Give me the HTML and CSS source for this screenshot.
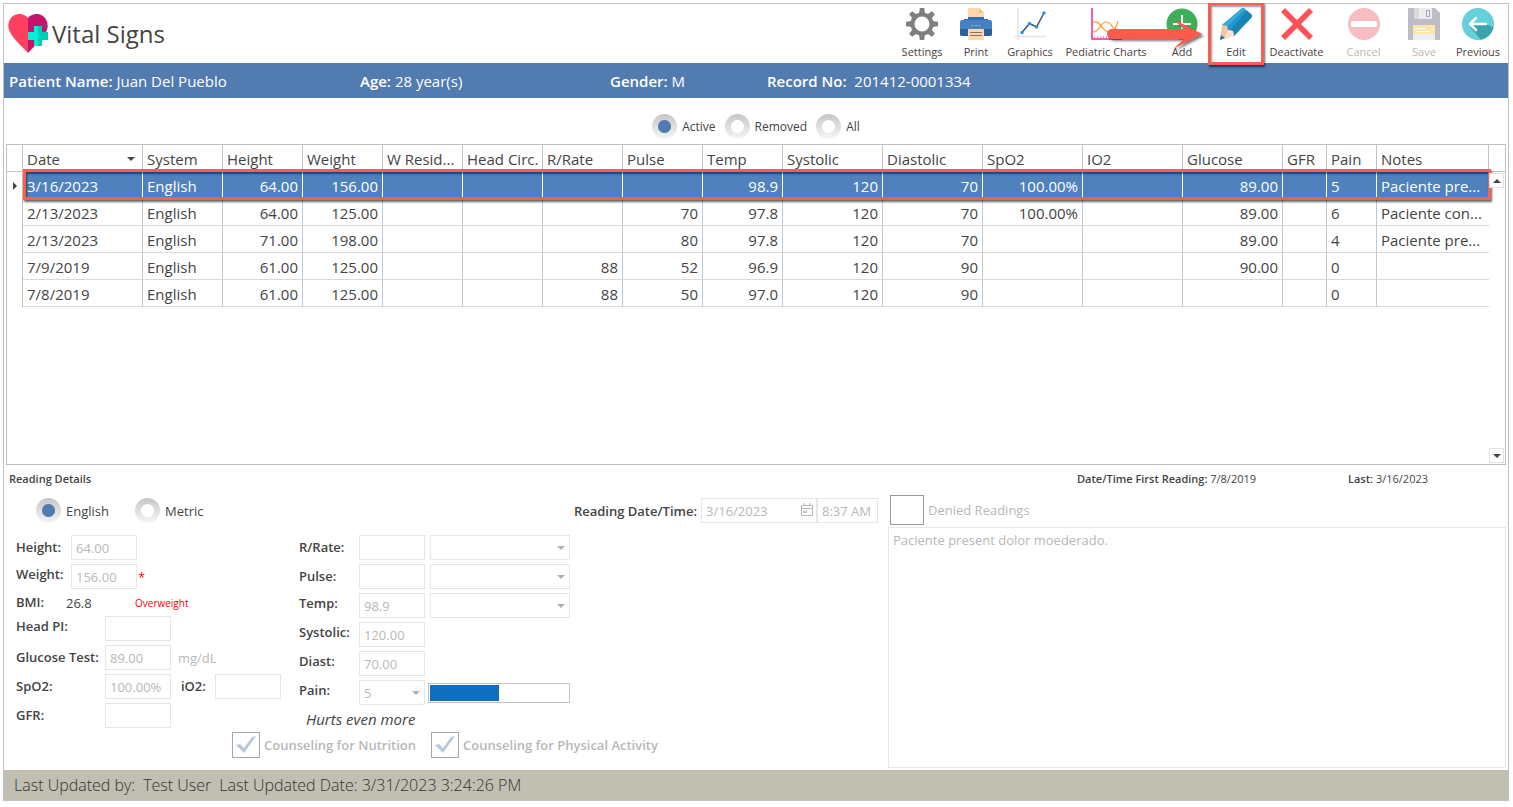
FILE: index.html
```html
<!DOCTYPE html>
<html lang="en">
<head>
    <meta charset="UTF-8">
    <meta name="viewport" content="width=device-width, initial-scale=1.0">
    <title>Vital Signs</title>
    <link rel="stylesheet" href="styles.css">
</head>
<body>

    <div class="app">
        <header class="app-header">
            <div class="brand">
                <svg class="brand-icon" viewBox="0 0 40 40">
                    <path fill="#ff4161" d="M20 4C16-1 9-1 5 2C0 6-1 13 2 18C6 26 14 32 20 39Z"/>
                    <path fill="#c7136b" d="M20 4C24-1 31-1 35 2C40 6 41 13 38 18C34 26 26 32 20 39Z"/>
                    <path fill="#00f0d5" d="M26 12h4v20h-4v-6h-6v-8h6z"/>
                    <path fill="#00cdb8" d="M30 12h4v6h6v8h-6v6h-4z"/>
                </svg>
                <h1>Vital Signs</h1>
            </div>

            <nav class="toolbar">
                <button type="button" class="tool">
                    <svg viewBox="0 0 32 32">
                        <circle cx="16" cy="16" r="9.5" fill="none" stroke="#7f7f7f" stroke-width="4"/>
                        <g fill="#7f7f7f">
                            <path id="tooth" d="M13 6L13.800 0h4.400L19 6z"/>
                            <use href="#tooth" transform="rotate(45 16 16)"/>
                            <use href="#tooth" transform="rotate(90 16 16)"/>
                            <use href="#tooth" transform="rotate(135 16 16)"/>
                            <use href="#tooth" transform="rotate(180 16 16)"/>
                            <use href="#tooth" transform="rotate(225 16 16)"/>
                            <use href="#tooth" transform="rotate(270 16 16)"/>
                            <use href="#tooth" transform="rotate(315 16 16)"/>
                        </g>
                    </svg>
                    <span>Settings</span>
                </button>
                <button type="button" class="tool">
                    <svg viewBox="0 0 32 32">
                        <path fill="#fdd7ad" d="M8 0h11l5 5v8H8z"/>
                        <path fill="#f0bc87" d="M19 0v5h5z"/>
                        <path fill="#2d6db4" d="M4 11h4V9h16v2h4v4H4z"/>
                        <rect y="12" width="32" height="16" rx="2" fill="#4482c3"/>
                        <path fill="#2b5f9e" d="M0 21h32v5a2 2 0 0 1-2 2H2a2 2 0 0 1-2-2z"/>
                        <path fill="#7fb0e0" d="M11 17h3v1h-3zM15 17h3v1h-3zM19 17h2v1h-2z"/>
                        <path fill="#fdd7ad" d="M8 21h16v11H8z"/>
                        <path fill="#8f7158" d="M10 24h12v1H10zM10 27h12v1H10z"/>
                    </svg>
                    <span>Print</span>
                </button>
                <button type="button" class="tool">
                    <svg viewBox="0 0 32 32">
                        <path fill="none" stroke="#e4e4e4" stroke-width="1.500" d="M4 0v32M0 28.500h32"/>
                        <path fill="none" stroke="#3b5470" stroke-width="1.500" d="M8 24.500l7.500-9 7 3.500L30 5"/>
                        <g fill="#2196f3">
                            <circle cx="8" cy="24.500" r="1.700"/>
                            <circle cx="15.500" cy="15.500" r="1.700"/>
                            <circle cx="22.500" cy="19" r="1.700"/>
                            <circle cx="30" cy="5" r="1.700"/>
                        </g>
                    </svg>
                    <span>Graphics</span>
                </button>
                <button type="button" class="tool tool-wide">
                    <svg viewBox="0 0 32 32">
                        <path fill="none" stroke="#ff9a1f" stroke-width="1.200" d="M3 14c8-2 9 10 16 10 5 0 7-4 9-11M3 24c7 0 7-10 13-10 7 0 6 9 12 9"/>
                        <path fill="none" stroke="#f5259c" stroke-width="1.500" d="M2 0v31h30"/>
                        <path stroke="#f5259c" stroke-dasharray="1 2" d="M4 29h28"/>
                    </svg>
                    <span>Pediatric Charts</span>
                </button>
                <button type="button" class="tool">
                    <svg viewBox="0 0 32 32">
                        <circle cx="16" cy="16" r="15.500" fill="#3fae5a"/>
                        <path stroke="#fff" stroke-width="2" d="M16 7v18M7 16h18"/>
                    </svg>
                    <span>Add</span>
                    <svg class="pointer-arrow" viewBox="0 0 96 32">
                        <path fill="#fb5b4b" d="M5 11h72L66 1l29 15-29 15 11-10H5a5 5 0 0 1 0-10z"/>
                    </svg>
                </button>
                <button type="button" class="tool tool-marked">
                    <svg viewBox="0 0 32 32">
                        <path fill="#1f97c9" d="M21 1q2-2 4 0l6 5q2 2 0 4L14 28 2 17z"/>
                        <path fill="#1a83b3" d="M27 3l4 3q2 2 0 4L14 28l-5-4z"/>
                        <path fill="#3cabd8" d="M21 1q2-2 4 0L6 20l-4-3z"/>
                        <path fill="#f6c3a0" d="M2 17l5 1 1 4 5 1 1 5-14 4z"/>
                        <path fill="#fae0cf" d="M8 22l5 1 1 5-10 3z"/>
                        <path fill="#1b7199" d="M1 27l4 3-5 2z"/>
                    </svg>
                    <span>Edit</span>
                </button>
                <button type="button" class="tool tool-medium">
                    <svg viewBox="0 0 32 32">
                        <path fill="#fd5357" d="M4 0l12 12L28 0l4 4-12 12 12 12-4 4-12-12L4 32l-4-4 12-12L0 4z"/>
                    </svg>
                    <span>Deactivate</span>
                </button>
                <button type="button" class="tool tool-medium" disabled>
                    <svg viewBox="0 0 32 32">
                        <circle cx="16" cy="16" r="16" fill="#f8bdc0"/>
                        <rect x="3" y="13" width="26" height="6" rx="2.500" fill="#fff"/>
                    </svg>
                    <span>Cancel</span>
                </button>
                <button type="button" class="tool" disabled>
                    <svg viewBox="0 0 32 32">
                        <path fill="#bcbdc7" d="M0 0h27l5 5v27H0z"/>
                        <path fill="#ececee" d="M6 0h18v11H6z"/>
                        <path fill="#d9dade" d="M6 0h5v11H6z"/>
                        <path fill="none" stroke="#a5a6b2" d="M18.500 2.500h3v6h-3z"/>
                        <path fill="#fce6a9" d="M5 17h22v9H5z"/>
                        <path fill="#eeeef0" d="M5 26h22v6H5z"/>
                        <path stroke="#fff" d="M8 20.500h9M8 23.500h14"/>
                    </svg>
                    <span>Save</span>
                </button>
                <button type="button" class="tool">
                    <svg viewBox="0 0 32 32">
                        <circle cx="16" cy="16" r="16" fill="#64d0d8"/>
                        <path fill="#3ca3ae" d="M8 16l8-1 8 1 7.500 3.500A16 16 0 0 1 19 31.700L8 19z"/>
                        <path fill="none" stroke="#fff" stroke-width="2.500" stroke-linecap="round" stroke-linejoin="round" d="M24 16H8.500M14 10l-6 6 6 6"/>
                    </svg>
                    <span>Previous</span>
                </button>
            </nav>
        </header>

        <section class="patient-bar">
            <div><strong>Patient Name:</strong> Juan Del Pueblo</div>
            <div><strong>Age:</strong> 28 year(s)</div>
            <div><strong>Gender:</strong> M</div>
            <div><strong>Record No:</strong>&nbsp; 201412-0001334</div>
        </section>

        <div class="filters">
            <label class="radio"><input type="radio" name="filter" checked> Active</label>
            <label class="radio"><input type="radio" name="filter"> Removed</label>
            <label class="radio"><input type="radio" name="filter"> All</label>
        </div>

        <section class="grid-frame">
            <table class="readings">
                <colgroup>
                    <col class="col-edge">
                    <col class="col-date">
                    <col class="col-small" span="8">
                    <col class="col-large" span="5">
                    <col class="col-gfr">
                    <col class="col-pain">
                    <col>
                    <col class="col-edge">
                </colgroup>
                <thead>
                    <tr>
                        <th></th>
                        <th><span class="sorted">Date</span></th>
                        <th>System</th>
                        <th>Height</th>
                        <th>Weight</th>
                        <th>W Resid...</th>
                        <th>Head Circ.</th>
                        <th>R/Rate</th>
                        <th>Pulse</th>
                        <th>Temp</th>
                        <th>Systolic</th>
                        <th>Diastolic</th>
                        <th>SpO2</th>
                        <th>IO2</th>
                        <th>Glucose</th>
                        <th>GFR</th>
                        <th>Pain</th>
                        <th>Notes</th>
                        <th></th>
                    </tr>
                </thead>
                <tbody>
                    <tr class="selected">
                        <td class="edge"><span class="row-marker"></span></td>
                        <td>3/16/2023</td><td>English</td>
                        <td class="num">64.00</td><td class="num">156.00</td><td></td><td></td>
                        <td class="num"></td><td class="num"></td><td class="num">98.9</td>
                        <td class="num">120</td><td class="num">70</td><td class="num">100.00%</td><td></td>
                        <td class="num">89.00</td><td></td><td>5</td><td>Paciente pre...</td>
                        <td class="edge"></td>
                    </tr>
                    <tr>
                        <td class="edge"></td>
                        <td>2/13/2023</td><td>English</td>
                        <td class="num">64.00</td><td class="num">125.00</td><td></td><td></td>
                        <td class="num"></td><td class="num">70</td><td class="num">97.8</td>
                        <td class="num">120</td><td class="num">70</td><td class="num">100.00%</td><td></td>
                        <td class="num">89.00</td><td></td><td>6</td><td>Paciente con...</td>
                        <td class="edge"></td>
                    </tr>
                    <tr>
                        <td class="edge"></td>
                        <td>2/13/2023</td><td>English</td>
                        <td class="num">71.00</td><td class="num">198.00</td><td></td><td></td>
                        <td class="num"></td><td class="num">80</td><td class="num">97.8</td>
                        <td class="num">120</td><td class="num">70</td><td class="num"></td><td></td>
                        <td class="num">89.00</td><td></td><td>4</td><td>Paciente pre...</td>
                        <td class="edge"></td>
                    </tr>
                    <tr>
                        <td class="edge"></td>
                        <td>7/9/2019</td><td>English</td>
                        <td class="num">61.00</td><td class="num">125.00</td><td></td><td></td>
                        <td class="num">88</td><td class="num">52</td><td class="num">96.9</td>
                        <td class="num">120</td><td class="num">90</td><td class="num"></td><td></td>
                        <td class="num">90.00</td><td></td><td>0</td><td></td>
                        <td class="edge"></td>
                    </tr>
                    <tr>
                        <td class="edge"></td>
                        <td>7/8/2019</td><td>English</td>
                        <td class="num">61.00</td><td class="num">125.00</td><td></td><td></td>
                        <td class="num">88</td><td class="num">50</td><td class="num">97.0</td>
                        <td class="num">120</td><td class="num">90</td><td class="num"></td><td></td>
                        <td class="num"></td><td></td><td>0</td><td></td>
                        <td class="edge"></td>
                    </tr>
                </tbody>
            </table>
            <div class="row-highlight"></div>
            <div class="scrollbar">
                <button type="button" class="scroll-up" aria-label="Scroll up"></button>
                <button type="button" class="scroll-down" aria-label="Scroll down"></button>
            </div>
        </section>

        <section class="details">
            <div class="details-heading">
                <h2>Reading Details</h2>
                <div><strong>Date/Time First Reading:</strong> 7/8/2019</div>
                <div><strong>Last:</strong> 3/16/2023</div>
            </div>

            <div class="details-body">
                <form class="reading-form">
                    <div class="form-top">
                        <div class="units">
                            <label class="radio"><input type="radio" name="units" checked> English</label>
                            <label class="radio"><input type="radio" name="units"> Metric</label>
                        </div>
                        <div class="datetime">
                            <label for="reading-date">Reading Date/Time:</label>
                            <div class="date-box">
                                <input type="text" id="reading-date" value="3/16/2023" disabled>
                                <svg viewBox="0 0 14 14"><path fill="none" stroke="#b8b8b8" d="M1.500 2.500h11v10h-11zM1.500 5.500h11M4 0v3M10 0v3M3.500 8h3v1.500h-3z"/></svg>
                            </div>
                            <input type="text" class="time-box" value="8:37 AM" aria-label="Reading time" disabled>
                        </div>
                    </div>

                    <div class="form-columns">
                        <div class="column column-body">
                            <div class="field field-near">
                                <label for="height">Height:</label>
                                <input type="text" id="height" value="64.00" disabled>
                            </div>
                            <div class="field field-near field-high">
                                <label for="weight">Weight:</label>
                                <input type="text" id="weight" value="156.00" disabled>
                                <span class="required">*</span>
                            </div>
                            <div class="field field-bmi">
                                <span class="name">BMI:</span>
                                <span class="bmi-value">26.8</span>
                                <span class="bmi-note">Overweight</span>
                            </div>
                            <div class="field field-high">
                                <label for="head">Head PI:</label>
                                <input type="text" id="head" disabled>
                            </div>
                            <div class="field">
                                <label for="glucose">Glucose Test:</label>
                                <input type="text" id="glucose" value="89.00" disabled>
                                <span class="unit">mg/dL</span>
                            </div>
                            <div class="field">
                                <label for="spo2">SpO2:</label>
                                <input type="text" id="spo2" value="100.00%" disabled>
                                <label for="io2" class="label-second">iO2:</label>
                                <input type="text" id="io2" disabled>
                            </div>
                            <div class="field">
                                <label for="gfr">GFR:</label>
                                <input type="text" id="gfr" disabled>
                            </div>
                        </div>

                        <div class="column column-vitals">
                            <div class="field">
                                <label for="rrate">R/Rate:</label>
                                <input type="text" id="rrate" disabled>
                                <select class="method" aria-label="R/Rate method" disabled><option></option></select>
                            </div>
                            <div class="field">
                                <label for="pulse">Pulse:</label>
                                <input type="text" id="pulse" disabled>
                                <select class="method" aria-label="Pulse method" disabled><option></option></select>
                            </div>
                            <div class="field field-high">
                                <label for="temp">Temp:</label>
                                <input type="text" id="temp" value="98.9" disabled>
                                <select class="method" aria-label="Temp method" disabled><option></option></select>
                            </div>
                            <div class="field field-high">
                                <label for="systolic">Systolic:</label>
                                <input type="text" id="systolic" value="120.00" disabled>
                            </div>
                            <div class="field field-high">
                                <label for="diast">Diast:</label>
                                <input type="text" id="diast" value="70.00" disabled>
                            </div>
                            <div class="field field-high">
                                <label for="pain">Pain:</label>
                                <select id="pain" disabled><option>5</option></select>
                                <progress class="pain-level" value="5" max="10" aria-label="Pain level"></progress>
                            </div>
                            <p class="pain-note">Hurts even more</p>
                        </div>
                    </div>

                    <div class="counseling">
                        <label class="check"><input type="checkbox" checked disabled> Counseling for Nutrition</label>
                        <label class="check"><input type="checkbox" checked disabled> Counseling for Physical Activity</label>
                    </div>
                </form>

                <div class="notes">
                    <label class="check denied"><input type="checkbox" disabled> Denied Readings</label>
                    <textarea aria-label="Notes" disabled>Paciente present dolor moederado.</textarea>
                </div>
            </div>
        </section>

        <footer class="status-bar">
            <span>Last Updated by:</span>
            <span>Test User</span>
            <span>Last Updated Date: 3/31/2023 3:24:26 PM</span>
        </footer>
    </div>

</body>
</html>
```

FILE: styles.css
```css
* { box-sizing: border-box; }
body { margin: 3px 4px 6px 3px; background: #fff; color: #444; font-family: 'Open Sans', 'Noto Sans', sans-serif; font-size: 13px; }
button, input, select, textarea { font: inherit; color: inherit; margin: 0; }
h1, h2, p { margin: 0; font-weight: 400; }
strong { font-weight: 600; }

.app { min-height: calc(100vh - 9px); display: flex; flex-direction: column; border: 1px solid #c3c3c3; }

/* Header and toolbar */
.app-header { display: flex; justify-content: space-between; height: 59px; padding: 0 3px 0 4px; }
.brand { display: flex; align-items: center; gap: 4px; }
.brand-icon { width: 40px; height: 40px; }
.brand h1 { font-size: 24px; }
.toolbar { display: flex; }
.tool { position: relative; width: 54px; padding: 4px 0 0; border: 0; background: none; display: flex; flex-direction: column; align-items: center; gap: 4px; font-size: 11px; line-height: 16px; white-space: nowrap; }
.tool svg { width: 32px; height: 32px; }
.tool-wide { width: 98px; }
.tool-medium { width: 67px; }
.tool:disabled { color: #b8b8b8; }
.tool .pointer-arrow { position: absolute; left: -48px; top: 14px; width: 96px; height: 32px; filter: drop-shadow(2px 2px 1px rgba(0, 0, 0, 0.5)); z-index: 1; }
.tool-marked::after { content: ''; position: absolute; inset: -2px -1px; border: 3px solid #f75f50; box-shadow: 1px 2px 2px rgba(0, 0, 0, 0.6), inset 1px 2px 2px rgba(0, 0, 0, 0.4); }

/* Patient bar */
.patient-bar { display: grid; grid-template-columns: 351px 250px 157px 1fr; align-items: center; height: 35px; padding: 0 5px; background: #527bb0; color: #fff; font-size: 15px; }

/* Radios */
.radio { display: flex; align-items: center; gap: 5px; }
.radio input { appearance: none; width: 25px; height: 25px; border-radius: 50%; background: radial-gradient(circle, #fff 6px, transparent 7px), linear-gradient(#c6c6c6, #f6f6f6); }
.radio input:checked { background: radial-gradient(circle, #527bb0 6px, transparent 7px), linear-gradient(#c6c6c6, #f6f6f6); }
.filters { display: flex; justify-content: center; gap: 9px; padding: 16px 0 5px; font-size: 12px; }

/* Readings grid */
.grid-frame { position: relative; flex: 1; margin: 0 2px; border: 1px solid #bdbdbd; }
.readings { width: 100%; table-layout: fixed; border-collapse: separate; border-spacing: 0; font-size: 15px; line-height: 20px; }
.col-edge { width: 16px; }
.col-date { width: 120px; }
.col-small { width: 80px; }
.col-large { width: 100px; }
.col-gfr { width: 44px; }
.col-pain { width: 50px; }
.readings th { height: 27px; padding: 4px 0 2px 4px; border-right: 1px solid #c3c3c3; border-bottom: 1px solid #c3c3c3; text-align: left; font-weight: 400; white-space: nowrap; }
.readings th:last-child { border-right: 0; }
.readings td { height: 27px; padding: 4px 4px 2px; border-right: 1px solid #b9c9dc; border-bottom: 1px solid #d9d9d9; white-space: nowrap; }
.readings .num { text-align: right; }
.readings .edge { padding: 0; border-bottom: 0; border-right-color: #c3c3c3; }
.readings td:nth-last-child(-n+2) { border-right: 0; padding-right: 0; }
.selected td { background: #4f81bd; color: #fff; border-right-color: #fff; }
.selected .edge { background: none; }
.sorted { display: flex; justify-content: space-between; align-items: center; padding-right: 7px; }
.sorted::after { content: ''; border: 4px solid transparent; border-top-color: #444; border-bottom: 0; }
.row-marker { display: block; margin-left: 6px; width: 0; border: 4px solid transparent; border-left-color: #444; border-right: 0; }
.row-highlight { position: absolute; top: 24px; left: 16px; right: 14px; height: 31px; border: 3px solid #f75f50; box-shadow: 1px 2px 2px rgba(0, 0, 0, 0.6), inset 1px 2px 2px rgba(0, 0, 0, 0.5); }
.scrollbar { position: absolute; top: 28px; right: 1px; bottom: 1px; display: flex; flex-direction: column; justify-content: space-between; }
.scrollbar button { width: 15px; height: 15px; padding: 0; border: 1px solid #e2e2e2; background: #fff; display: flex; align-items: center; justify-content: center; }
.scrollbar button::after { content: ''; border: 4px solid transparent; }
.scrollbar .scroll-up::after { border-bottom-color: #444; border-top: 0; }
.scrollbar .scroll-down::after { border-top-color: #444; border-bottom: 0; }

/* Reading details */
.details-heading { display: grid; grid-template-columns: 1fr 271px 160px; align-items: center; height: 26px; padding: 0 0 0 5px; font-size: 11px; }
.details-heading h2 { font-size: 11px; font-weight: 600; }
.details-body { display: grid; grid-template-columns: 884px 1fr; }
.reading-form { padding: 7px 10px 12px 12px; }
.form-top { display: flex; justify-content: space-between; margin-bottom: 12px; }
.units { display: flex; gap: 26px; padding-left: 20px; }
.datetime { display: flex; align-items: center; }
.datetime label { margin-right: 4px; font-weight: 600; }
.date-box { position: relative; width: 116px; }
.date-box svg { position: absolute; right: 3px; top: 5px; width: 14px; height: 14px; }
.reading-form input[type="text"], .reading-form select { width: 66px; height: 25px; padding: 0 4px; border: 1px solid #e6e6e6; border-radius: 0; background: #fff; color: #b8b8b8; opacity: 1; }
.reading-form .date-box input[type="text"] { width: 116px; }
.reading-form input[type="text"].time-box { width: 61px; }
.reading-form select { appearance: none; background: url("data:image/svg+xml,%3Csvg xmlns='http://www.w3.org/2000/svg' width='8' height='4'%3E%3Cpath fill='%23b0b0b0' d='M0 0h8L4 4z'/%3E%3C/svg%3E") no-repeat right 4px center; }
.reading-form .method { width: 140px; margin-left: 5px; }

.form-columns { display: flex; }
.column { display: flex; flex-direction: column; gap: 4px; }
.column-body { width: 283px; }
.field { display: flex; align-items: center; height: 25px; }
.field label, .field .name { width: 89px; font-weight: 600; line-height: 21px; }
.field-near label { width: 55px; }
.field-high label { align-self: flex-start; }
.field-bmi { height: 19px; }
.field-bmi .name { width: 50px; }
.bmi-value { width: 69px; }
.bmi-note { color: #f00; font-size: 10px; }
.required { margin-left: 1px; color: #f00; }
.unit { margin-left: 7px; color: #b8b8b8; }
.field .label-second { width: 34px; margin-left: 10px; }
.column-vitals .field label { width: 60px; }
.pain-level { appearance: none; width: 142px; height: 20px; margin-left: 3px; border: 1px solid #c3c3c3; background: #fff; }
.pain-level::-webkit-progress-bar { background: #fff; padding: 1px; }
.pain-level::-webkit-progress-value { background: #106ebe; }
.pain-note { padding-left: 7px; font-size: 15px; font-style: italic; line-height: 20px; }

.counseling { display: flex; gap: 15px; margin-top: 3px; padding-left: 216px; }
.check { display: flex; align-items: center; gap: 4px; color: #b8b8b8; }
.counseling .check { font-weight: 600; }
.check input { appearance: none; width: 28px; height: 26px; border: 1px solid #a8a8a8; background: #fff; }
.check input:checked { background: url("data:image/svg+xml,%3Csvg xmlns='http://www.w3.org/2000/svg' width='20' height='18'%3E%3Cpath fill='%23b5c8e0' d='M0 9l4-1 4 4L16 1l4-1L8 17z'/%3E%3C/svg%3E") no-repeat center; }

.notes { display: flex; flex-direction: column; padding: 4px 2px 2px 0; gap: 2px; }
.notes .denied { padding-left: 2px; }
.notes .denied input { width: 34px; height: 30px; border-color: #999; }
.notes textarea { flex: 1; width: 100%; padding: 3px 4px; border: 1px solid #e6e6e6; background: #fff; color: #b8b8b8; resize: none; }

/* Status bar */
.status-bar { display: flex; align-items: center; gap: 8px; height: 30px; padding: 0 10px; background: #c1beb2; font-size: 16px; font-weight: 300; color: #333; }
```
